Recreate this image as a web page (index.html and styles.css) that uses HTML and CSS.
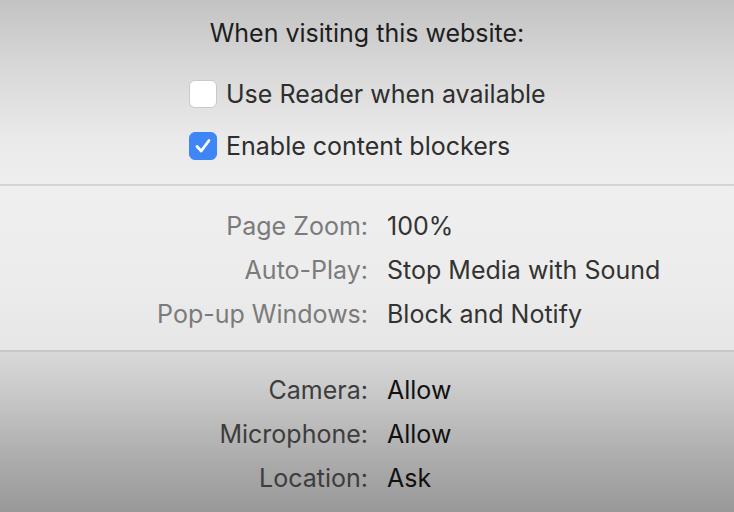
FILE: index.html
```html
<!DOCTYPE html>
<html lang="en">
<head>
<meta charset="utf-8">
<title>Website settings</title>
<link rel="stylesheet" href="styles.css">
</head>
<body>
<div class="panel">
  <section class="top">
    <div class="heading">When visiting this website:</div>
    <div class="checks">
      <label class="check">
        <span class="box"></span>
        <span class="check-text">Use Reader when available</span>
      </label>
      <label class="check">
        <span class="box on">
          <svg viewBox="0 0 28 28" width="28" height="28"><path d="M8 14.5 L12.2 19 L20 8.5" fill="none" stroke="#fff" stroke-width="2.8" stroke-linecap="round" stroke-linejoin="round"/></svg>
        </span>
        <span class="check-text">Enable content blockers</span>
      </label>
    </div>
  </section>
  <section class="rows mid">
    <div class="label">Page Zoom:</div><div class="value">100%</div>
    <div class="label">Auto-Play:</div><div class="value">Stop Media with Sound</div>
    <div class="label">Pop-up Windows:</div><div class="value">Block and Notify</div>
  </section>
  <section class="rows low">
    <div class="label">Camera:</div><div class="value">Allow</div>
    <div class="label">Microphone:</div><div class="value">Allow</div>
    <div class="label">Location:</div><div class="value">Ask</div>
  </section>
</div>
</body>
</html>
```

FILE: styles.css
```css
html, body {
  margin: 0;
  padding: 0;
}
body {
  width: 734px;
  height: 512px;
  overflow: hidden;
  font-family: "Inter", "Roboto", "Liberation Sans", sans-serif;
  background: #999;
}
.panel {
  display: flex;
  flex-direction: column;
  height: 512px;
}
.top {
  height: 186px;
  box-sizing: border-box;
  padding-top: 19px;
  background: linear-gradient(to bottom, #c3c3c3 0%, #d7d7d7 35%, #eaeaea 75%, #eeeeee 100%);
  border-bottom: 2px solid #d4d4d4;
}
.heading {
  text-align: center;
  font-size: 25px;
  color: #1e1e1e;
  height: 28px;
  line-height: 28px;
}
.checks {
  display: flex;
  flex-direction: column;
  gap: 24px;
  padding-left: 189px;
  padding-top: 33px;
}
.check {
  display: flex;
  align-items: center;
  gap: 9px;
  height: 28px;
}
.box {
  width: 26px;
  height: 26px;
  border: 1px solid #c9c9c9;
  border-radius: 6px;
  background: #fff;
  display: flex;
}
.box.on {
  background: #3e86f5;
  border-color: #3e86f5;
}
.box.on svg {
  margin: -1px;
}
.check-text {
  font-size: 25px;
  color: #2e2e2e;
}
.rows {
  display: grid;
  grid-template-columns: 368px 1fr;
  column-gap: 19px;
  grid-auto-rows: 44px;
  align-content: start;
  font-size: 25px;
  line-height: 44px;
}
.label {
  text-align: right;
}
.mid {
  height: 166px;
  box-sizing: border-box;
  padding-top: 18px;
  background: linear-gradient(to bottom, #efefef 0%, #ececec 60%, #e6e6e6 100%);
  border-bottom: 2px solid #c8c8c8;
}
.mid .label { color: #7b7b7b; }
.mid .value { color: #333; }
.low {
  flex: 1;
  padding-top: 16px;
  background: linear-gradient(to bottom, #d9d9d9 0%, #c6c6c6 30%, #aaaaaa 70%, #999999 100%);
}
.low .label { color: #3d3d3d; }
.low .value { color: #111; }
```
